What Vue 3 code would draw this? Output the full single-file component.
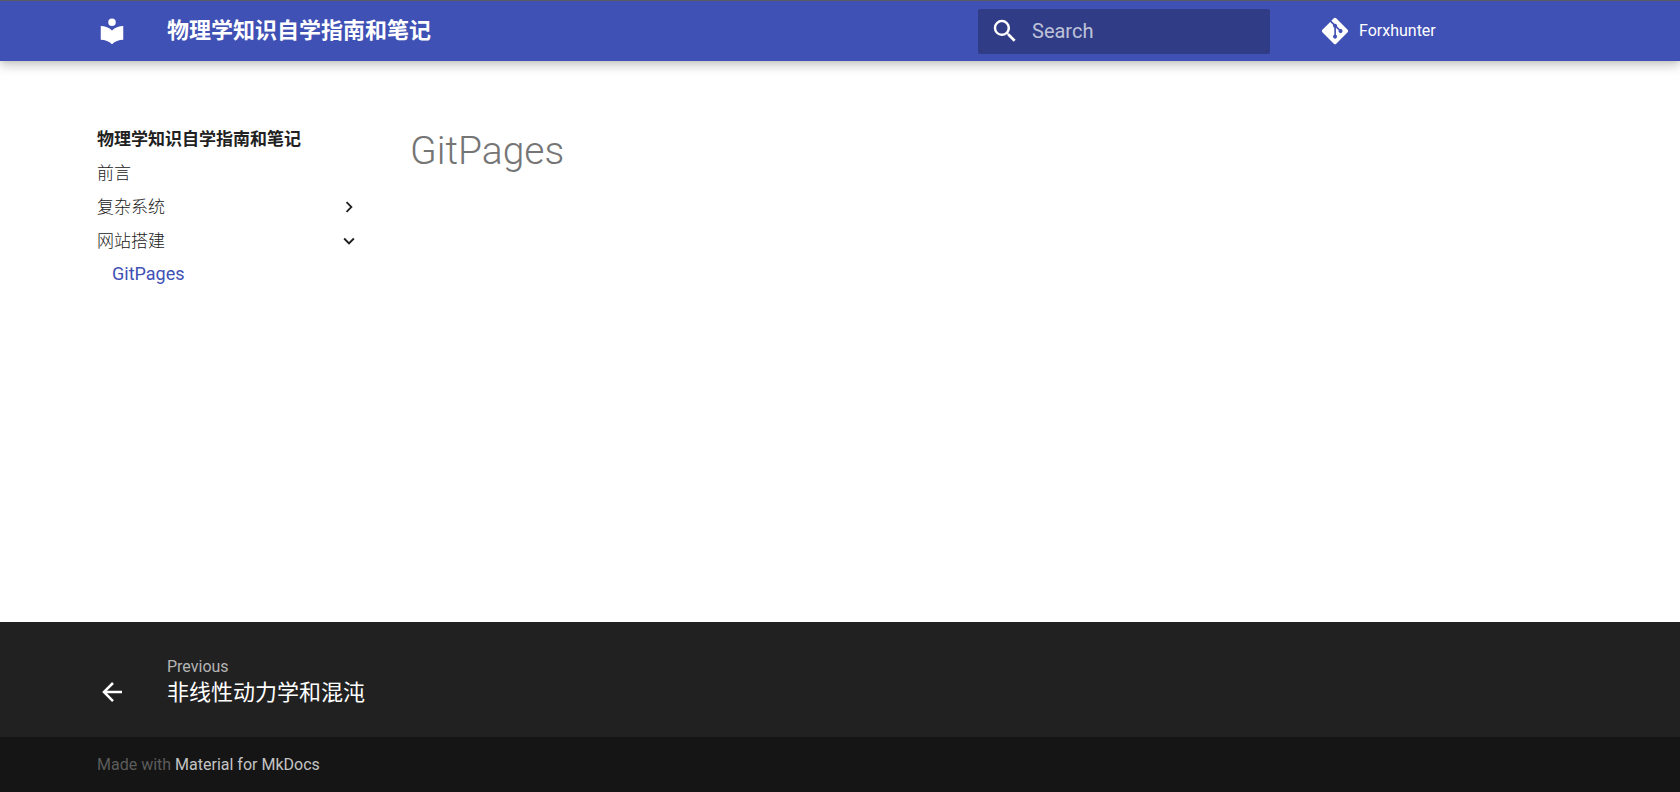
<script setup>
import { ref } from 'vue'

const query = ref('')
const siteName = '物理学知识自学指南和笔记'
const sections = [
  { title: '前言' },
  { title: '复杂系统', expandable: true, open: false },
  { title: '网站搭建', expandable: true, open: true, children: ['GitPages'] },
]
</script>

<template>
  <div class="page">
    <header class="header">
      <div class="grid bar">
        <a class="logo" href="#" :aria-label="siteName">
          <svg viewBox="0 0 24 24" width="30" height="30"><path fill="currentColor" d="M12 8a3 3 0 0 0 3-3 3 3 0 0 0-3-3 3 3 0 0 0-3 3 3 3 0 0 0 3 3m0 3.54C9.64 9.35 6.5 8 3 8v11c3.5 0 6.64 1.35 9 3.54 2.36-2.19 5.5-3.54 9-3.54V8c-3.5 0-6.64 1.35-9 3.54Z" /></svg>
        </a>
        <span class="topic">{{ siteName }}</span>
        <form class="search" role="search" @submit.prevent>
          <svg viewBox="0 0 24 24" width="30" height="30" aria-hidden="true"><path fill="currentColor" d="M9.5 3A6.5 6.5 0 0 1 16 9.5c0 1.61-.59 3.09-1.56 4.23l.27.27h.79l5 5-1.5 1.5-5-5v-.79l-.27-.27A6.516 6.516 0 0 1 9.5 16 6.5 6.5 0 0 1 3 9.5 6.5 6.5 0 0 1 9.5 3m0 2C7 5 5 7 5 9.5S7 14 9.5 14 14 12 14 9.5 12 5 9.5 5Z" /></svg>
          <input v-model="query" type="text" placeholder="Search" aria-label="Search" />
        </form>
        <a class="source" href="#">
          <svg viewBox="0 0 448 512" width="30" height="30" aria-hidden="true"><path fill="currentColor" d="M439.55 236.05 244 40.45a28.87 28.87 0 0 0-40.81 0l-40.66 40.63 51.52 51.52c27.06-9.14 52.68 16.77 43.39 43.68l49.66 49.66c34.23-11.8 61.18 31 35.47 56.69-26.49 26.49-70.21-2.87-56-37.34L240.22 199v121.85c25.3 12.54 22.26 41.85 9.08 55a34.34 34.34 0 0 1-48.55 0c-17.57-17.6-11.07-46.91 11.25-56v-123c-20.8-8.51-24.6-30.74-18.64-45L142.57 101 8.45 235.14a28.86 28.86 0 0 0 0 40.81l195.61 195.6a28.86 28.86 0 0 0 40.8 0l194.69-194.69a28.86 28.86 0 0 0 0-40.81z" /></svg>
          <span>Forxhunter</span>
        </a>
      </div>
    </header>

    <div class="grid main">
      <nav class="sidebar" :aria-label="siteName">
        <a class="nav-title" href="#">{{ siteName }}</a>
        <ul>
          <li v-for="s in sections" :key="s.title">
            <button v-if="s.expandable" type="button" class="item" :aria-expanded="s.open">
              <span>{{ s.title }}</span>
              <svg :class="{ open: s.open }" viewBox="0 0 24 24" width="22" height="22" aria-hidden="true"><path fill="currentColor" d="M8.59 16.58 13.17 12 8.59 7.41 10 6l6 6-6 6-1.41-1.42Z" /></svg>
            </button>
            <a v-else class="item" href="#">{{ s.title }}</a>
            <ul v-if="s.children" class="sub">
              <li v-for="c in s.children" :key="c"><a class="item current" href="#">{{ c }}</a></li>
            </ul>
          </li>
        </ul>
      </nav>
      <main class="content">
        <h1>GitPages</h1>
      </main>
    </div>

    <footer>
      <div class="foot-nav">
        <div class="grid">
          <a class="prev" href="#">
            <svg viewBox="0 0 24 24" width="30" height="30" aria-hidden="true"><path fill="currentColor" d="M20 11v2H8l5.5 5.5-1.42 1.42L4.16 12l7.92-7.92L13.5 5.5 8 11h12Z" /></svg>
            <span class="prev-text">
              <span class="direction">Previous</span>
              <span class="prev-title">非线性动力学和混沌</span>
            </span>
          </a>
        </div>
      </div>
      <div class="foot-meta">
        <div class="grid made">Made with <a href="#">Material for MkDocs</a></div>
      </div>
    </footer>
  </div>
</template>

<style>
body {
  margin: 0;
  background: #fff;
}
</style>

<style scoped>
.page {
  display: flex;
  flex-direction: column;
  min-height: 100vh;
  font-family: Roboto, "Noto Sans CJK SC", sans-serif;
  color: #212121;
}
a {
  color: inherit;
  text-decoration: none;
}
svg {
  display: block;
  flex: none;
}
ul {
  list-style: none;
  margin: 0;
  padding: 0;
}
.grid {
  box-sizing: border-box;
  width: 100%;
  max-width: 1526px;
  margin: 0 auto;
  padding: 0 20px;
}
.header {
  border-top: 1px solid #5b5b60;
  background: #4051b5;
  color: #fff;
  box-shadow: 0 0 5px rgba(0, 0, 0, 0.1), 0 5px 10px rgba(0, 0, 0, 0.2);
}
.bar {
  display: flex;
  align-items: center;
  height: 60px;
}
.topic {
  flex: 1;
  margin-left: 40px;
  font-size: 22px;
  font-weight: 700;
  line-height: 60px;
  white-space: nowrap;
}
.search {
  display: flex;
  align-items: center;
  box-sizing: border-box;
  width: 292px;
  height: 45px;
  padding-left: 12px;
  border-radius: 2px;
  background: #303d86;
}
.search input {
  flex: 1;
  min-width: 0;
  height: 45px;
  padding: 0 0 0 12px;
  border: 0;
  outline: 0;
  background: none;
  color: #fff;
  font-family: inherit;
  font-size: 20px;
}
.search input::placeholder {
  color: rgba(255, 255, 255, 0.7);
}
.source {
  display: flex;
  align-items: center;
  gap: 9px;
  box-sizing: border-box;
  width: 313px;
  padding-left: 50px;
  font-size: 16px;
}
.source span {
  padding-bottom: 2px;
}
.main {
  display: flex;
  flex: 1;
  padding-top: 67px;
}
.sidebar {
  width: 263px;
  font-size: 17px;
  line-height: 24px;
}
.nav-title {
  display: block;
  font-weight: 700;
  line-height: 23px;
}
.item {
  display: flex;
  align-items: center;
  justify-content: space-between;
  box-sizing: border-box;
  width: 100%;
  height: 24px;
  margin-top: 10px;
  padding: 0;
  border: 0;
  background: none;
  color: inherit;
  font: inherit;
  font-weight: 300;
}
.open {
  transform: rotate(90deg);
}
.sub {
  padding-left: 15px;
}
.sub .item {
  margin-top: 9px;
}
.current {
  color: #4051b5;
  font-size: 18px;
  font-weight: 400;
}
.content {
  flex: 1;
  padding-left: 50px;
}
h1 {
  margin: 0;
  color: #757575;
  font-size: 39px;
  font-weight: 300;
  line-height: 46px;
}
.foot-nav {
  background: #212121;
  color: #fff;
}
.prev {
  display: flex;
  align-items: flex-end;
  width: fit-content;
  padding: 32px 0 30px;
}
.prev-text {
  display: flex;
  flex-direction: column;
  margin-left: 40px;
}
.direction {
  color: #b5b5b5;
  font-size: 16px;
  line-height: 25px;
}
.prev-title {
  font-size: 22px;
  line-height: 28px;
}
.foot-meta {
  background: #151515;
}
.made {
  color: #5c5c5c;
  font-size: 16px;
  line-height: 55px;
}
.made a {
  color: #c4c4c4;
}
</style>
